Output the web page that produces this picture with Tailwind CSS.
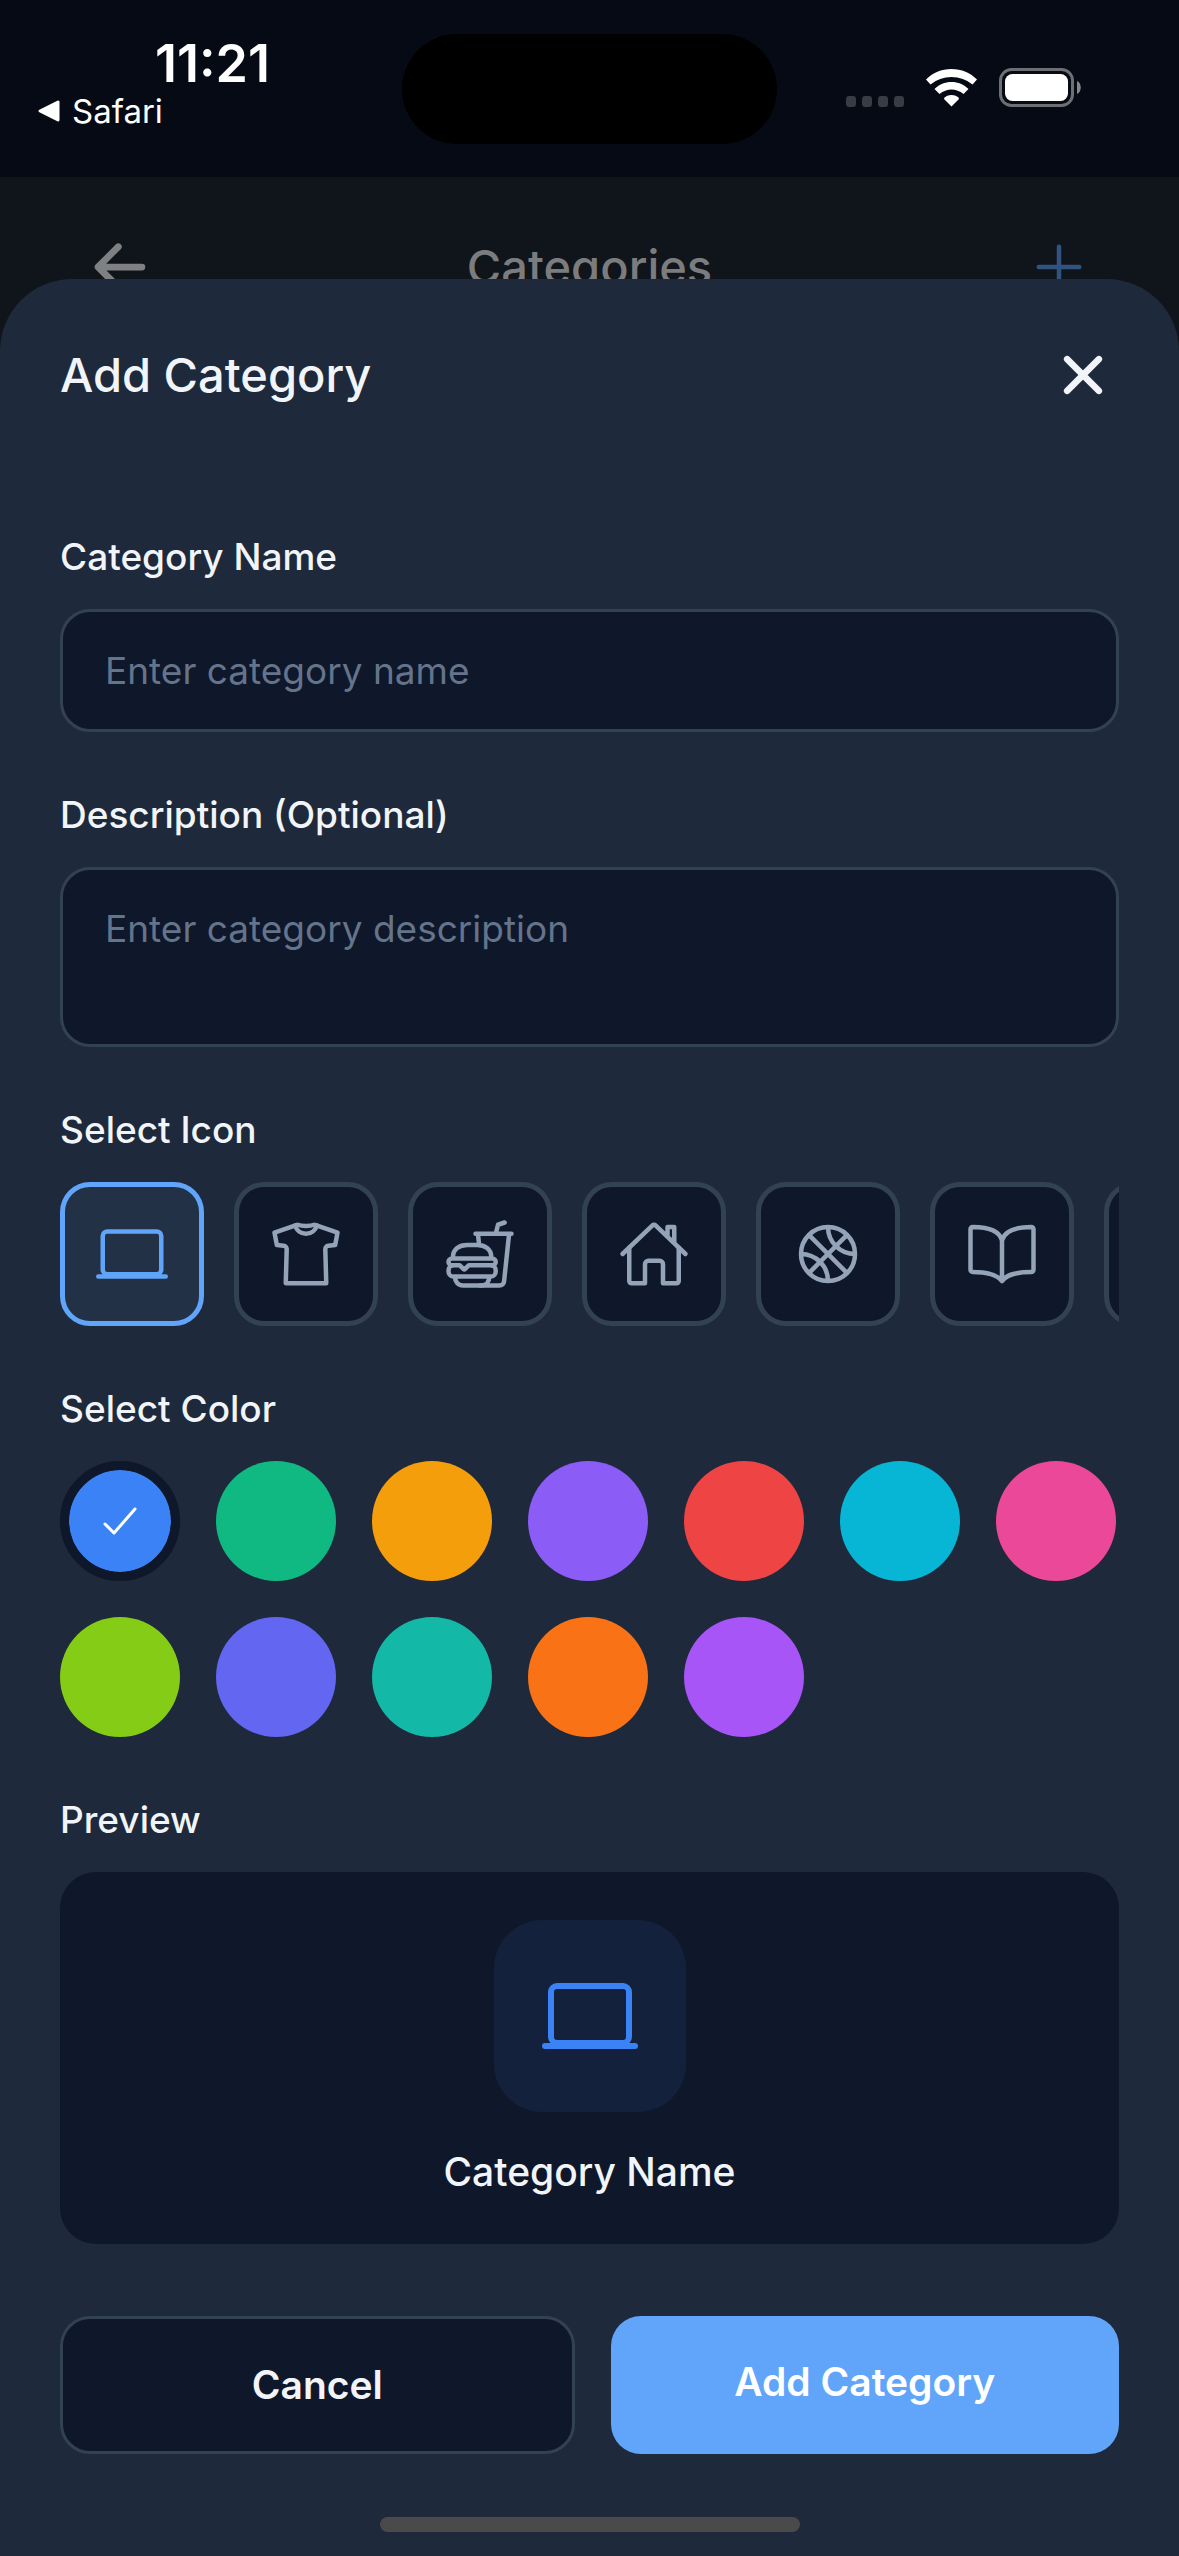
<!DOCTYPE html>
<html lang="en">
<head>
<meta charset="utf-8">
<meta name="viewport" content="width=device-width, initial-scale=1">
<title>Add Category</title>
<script src="https://cdn.jsdelivr.net/npm/@tailwindcss/browser@4"></script>
</head>
<body class="flex min-h-screen flex-col bg-[#10141b] font-[Inter,'Liberation_Sans',sans-serif] text-[#f1f5f9]">

<!-- Shared icon shapes -->
<svg class="hidden" aria-hidden="true">
  <symbol id="laptop" viewBox="0 0 512 512"><rect x="48" y="96" width="416" height="304" rx="32" stroke-linejoin="round"/><path d="M16 416h480"/></symbol>
</svg>

<!-- Status bar -->
<div class="grid h-[177px] grid-cols-[1fr_375px_1fr] bg-[#050a14] text-white">
  <div class="flex flex-col pt-8 pl-9">
    <time class="pl-[119px] text-[52px] leading-[64px] font-semibold">11:21</time>
    <a href="#" class="flex items-center gap-3 text-[33px] leading-[30px]">
      <svg class="h-6 w-6" viewBox="0 0 24 24" fill="currentColor" stroke="currentColor" stroke-width="3" stroke-linejoin="round"><path d="M4 12 22 3v18z"/></svg>
      Safari
    </a>
  </div>
  <div class="mt-[34px] h-[110px] rounded-full bg-black"></div>
  <div class="flex items-start gap-[22px] pt-[68px] pl-[69px]">
    <svg class="h-[39px] w-[58px]" viewBox="0 0 58 39" fill="#3a3c45"><rect y="28" width="10" height="11" rx="3"/><rect x="16" y="28" width="10" height="11" rx="3"/><rect x="32" y="28" width="10" height="11" rx="3"/><rect x="48" y="28" width="10" height="11" rx="3"/></svg>
    <svg class="h-[39px] w-[51px]" viewBox="0 0 51 39" fill="white"><path d="M25.500 1C35.500 1 44.500 5 51 11.500L46.500 16.500Q37.500 9 25.500 9T4.500 16.500L0 11.500C6.500 5 15.500 1 25.500 1Z"/><path d="M25.500 14C32 14 38 16.500 42.500 21L37.500 26Q32 21.500 25.500 21.500T13.500 26L8.500 21C13 16.500 19 14 25.500 14Z"/><path d="M25.500 27C28.500 27 31 28 33 30L32.500 31.500 25.500 38.500 18.500 31.500 18 30C20 28 22.500 27 25.500 27Z"/></svg>
    <svg class="h-[39px] w-[82px]" viewBox="0 0 82 39"><rect x="1.500" y="1.500" width="72" height="36" rx="11" fill="none" stroke="#6d6f75" stroke-width="3"/><rect x="6" y="6" width="63" height="27" rx="7.500" fill="white"/><path d="M78 13c5 2 5 11 0 13z" fill="#85878c"/></svg>
  </div>
</div>

<!-- Screen behind the sheet -->
<header class="flex items-center justify-between px-[84px] py-[54px]">
  <button type="button" aria-label="Back" class="text-[#7f8082]">
    <svg class="size-[72px]" viewBox="0 0 512 512" fill="none" stroke="currentColor" stroke-width="48" stroke-linecap="round" stroke-linejoin="round"><path d="M244 400 100 256l144-144M120 256h292"/></svg>
  </button>
  <h1 class="text-[47px] leading-[72px] font-medium text-[#7b7c7e]">Categories</h1>
  <button type="button" aria-label="New category" class="text-[#305380]">
    <svg class="size-[72px]" viewBox="0 0 512 512" fill="none" stroke="currentColor" stroke-width="32" stroke-linecap="round"><path d="M256 112v288M400 256H112"/></svg>
  </button>
</header>

<!-- Sheet -->
<form class="relative -mt-[78px] flex grow flex-col rounded-t-[72px] bg-[#1e293b] px-[60px] pt-[60px] pb-6">
  <div class="mb-[122px] flex items-center justify-between">
    <h2 class="text-[47px] leading-[72px] font-medium">Add Category</h2>
    <button type="button" aria-label="Close">
      <svg class="size-[72px]" viewBox="0 0 512 512" fill="none" stroke="currentColor" stroke-width="46" stroke-linecap="round"><path d="m143 143 226 226M369 143 143 369"/></svg>
    </button>
  </div>

  <div class="flex flex-col gap-[59px]">
    <div class="flex flex-col gap-7">
      <label for="name" class="text-[37px] leading-[48px] font-medium">Category Name</label>
      <input id="name" type="text" placeholder="Enter category name" class="w-full rounded-[30px] border-3 border-[#334155] bg-[#0f172a] px-[42px] py-9 text-[37px] leading-[45px] placeholder:text-[#64748b]">
    </div>

    <div class="flex flex-col gap-7">
      <label for="description" class="text-[37px] leading-[48px] font-medium">Description (Optional)</label>
      <textarea id="description" placeholder="Enter category description" class="h-[180px] w-full resize-none rounded-[30px] border-3 border-[#334155] bg-[#0f172a] px-[42px] py-9 text-[37px] leading-[45px] placeholder:text-[#64748b]"></textarea>
    </div>

    <fieldset class="min-w-0">
      <legend class="mb-7 text-[37px] leading-[48px] font-medium">Select Icon</legend>
      <div class="flex gap-[30px] overflow-hidden text-[#94a3b8]">
        <label class="relative grid size-36 shrink-0 place-items-center rounded-[30px] border-5 border-[#60a5fa] bg-[#233147] text-[#60a5fa]">
          <input type="radio" name="icon" value="laptop" checked class="sr-only" aria-label="Laptop">
          <svg class="size-[72px]" fill="none" stroke="currentColor" stroke-width="32" stroke-linecap="round"><use href="#laptop"/></svg>
        </label>
        <label class="relative grid size-36 shrink-0 place-items-center rounded-[30px] border-5 border-[#334155] bg-[#0f172a]">
          <input type="radio" name="icon" value="shirt" class="sr-only" aria-label="Shirt">
          <svg class="size-[72px]" viewBox="0 0 512 512" fill="none" stroke="currentColor" stroke-width="32" stroke-linecap="round" stroke-linejoin="round"><path d="M314.560 48s-22.780 8-58.560 8-58.560-8-58.560-8a31.940 31.940 0 0 0-10.570 1.800L32 104l16.630 88 48.880 5.520a24 24 0 0 1 21.290 24.580L112 464h288l-6.800-241.900a24 24 0 0 1 21.290-24.580L463.370 192 480 104 325.130 49.800a31.940 31.940 0 0 0-10.570-1.800z"/><path d="M333.310 52.660a80 80 0 0 1-154.620 0"/></svg>
        </label>
        <label class="relative grid size-36 shrink-0 place-items-center rounded-[30px] border-5 border-[#334155] bg-[#0f172a]">
          <input type="radio" name="icon" value="food" class="sr-only" aria-label="Fast food">
          <svg class="size-[72px]" viewBox="0 0 512 512" fill="none" stroke="currentColor" stroke-width="32" stroke-linecap="round" stroke-linejoin="round"><path d="M322 416c0 35.350-20.650 64-56 64H134c-35.350 0-56-28.650-56-64M336 336c17.670 0 32 17.910 32 40s-14.330 40-32 40H64c-17.670 0-32-17.910-32-40s14.330-40 32-40"/><path d="M344 336H179.310a8 8 0 0 0-5.650 2.340l-26.830 26.830a4 4 0 0 1-5.660 0l-26.830-26.830a8 8 0 0 0-5.650-2.340H56a24 24 0 0 1 0-48h288a24 24 0 0 1 0 48zM64 276v-.220c0-55 45-83.780 100-83.780h72c55 0 100 29 100 84M241 112l7.440 63.970M256 480h139.310a32 32 0 0 0 31.910-29.610L463 112M368 112l16-64 47-16M224 112h256"/></svg>
        </label>
        <label class="relative grid size-36 shrink-0 place-items-center rounded-[30px] border-5 border-[#334155] bg-[#0f172a]">
          <input type="radio" name="icon" value="home" class="sr-only" aria-label="Home">
          <svg class="size-[72px]" viewBox="0 0 512 512" fill="none" stroke="currentColor" stroke-width="32" stroke-linecap="round" stroke-linejoin="round"><path d="M80 212v236a16 16 0 0 0 16 16h96V328a24 24 0 0 1 24-24h80a24 24 0 0 1 24 24v136h96a16 16 0 0 0 16-16V212"/><path d="M480 256 266.890 52c-5-5.280-16.690-5.340-21.780 0L32 256M400 179V64h-48v69"/></svg>
        </label>
        <label class="relative grid size-36 shrink-0 place-items-center rounded-[30px] border-5 border-[#334155] bg-[#0f172a]">
          <input type="radio" name="icon" value="sports" class="sr-only" aria-label="Basketball">
          <svg class="size-[72px]" viewBox="0 0 512 512" fill="none" stroke="currentColor" stroke-width="32"><circle cx="256" cy="256" r="192"/><path d="m120 120 272 272M392 120 120 392M256 64a192 192 0 0 0 192 192M64 256a192 192 0 0 1 192 192"/></svg>
        </label>
        <label class="relative grid size-36 shrink-0 place-items-center rounded-[30px] border-5 border-[#334155] bg-[#0f172a]">
          <input type="radio" name="icon" value="book" class="sr-only" aria-label="Book">
          <svg class="size-[72px]" viewBox="0 0 512 512" fill="none" stroke="currentColor" stroke-width="32" stroke-linecap="round" stroke-linejoin="round"><path d="M256 160c16-63.160 76.430-95.410 208-96a15.940 15.940 0 0 1 16 16v288a16 16 0 0 1-16 16c-128 0-177.450 25.810-208 64-30.370-38-80-64-208-64-9.880 0-16-8.050-16-17V80a15.940 15.940 0 0 1 16-16c131.570.590 192 32.840 208 96zM256 160v288"/></svg>
        </label>
        <label class="relative grid size-36 shrink-0 place-items-center rounded-[30px] border-5 border-[#334155] bg-[#0f172a]">
          <input type="radio" name="icon" value="other" class="sr-only" aria-label="Other">
        </label>
      </div>
    </fieldset>

    <fieldset class="min-w-0">
      <legend class="mb-7 text-[37px] leading-[48px] font-medium">Select Color</legend>
      <div class="flex flex-wrap gap-9">
        <label class="relative grid size-[120px] place-items-center rounded-full border-9 border-[#0f172a] bg-[#3b82f6] bg-clip-padding">
          <input type="radio" name="color" value="blue" checked class="sr-only" aria-label="Blue">
          <svg class="size-12" viewBox="0 0 512 512" fill="none" stroke="white" stroke-width="32" stroke-linecap="round" stroke-linejoin="round"><path d="M416 128 192 384l-96-96"/></svg>
        </label>
        <input type="radio" name="color" value="emerald" aria-label="Emerald" class="size-[120px] appearance-none rounded-full bg-[#10b981]">
        <input type="radio" name="color" value="amber" aria-label="Amber" class="size-[120px] appearance-none rounded-full bg-[#f59e0b]">
        <input type="radio" name="color" value="violet" aria-label="Violet" class="size-[120px] appearance-none rounded-full bg-[#8b5cf6]">
        <input type="radio" name="color" value="red" aria-label="Red" class="size-[120px] appearance-none rounded-full bg-[#ef4444]">
        <input type="radio" name="color" value="cyan" aria-label="Cyan" class="size-[120px] appearance-none rounded-full bg-[#06b6d4]">
        <input type="radio" name="color" value="pink" aria-label="Pink" class="size-[120px] appearance-none rounded-full bg-[#ec4899]">
        <input type="radio" name="color" value="lime" aria-label="Lime" class="size-[120px] appearance-none rounded-full bg-[#84cc16]">
        <input type="radio" name="color" value="indigo" aria-label="Indigo" class="size-[120px] appearance-none rounded-full bg-[#6366f1]">
        <input type="radio" name="color" value="teal" aria-label="Teal" class="size-[120px] appearance-none rounded-full bg-[#14b8a6]">
        <input type="radio" name="color" value="orange" aria-label="Orange" class="size-[120px] appearance-none rounded-full bg-[#f97316]">
        <input type="radio" name="color" value="purple" aria-label="Purple" class="size-[120px] appearance-none rounded-full bg-[#a855f7]">
      </div>
    </fieldset>

    <section>
      <h3 class="mb-7 text-[37px] leading-[48px] font-medium">Preview</h3>
      <div class="flex flex-col items-center gap-9 rounded-[36px] bg-[#0f172a] py-12">
        <div class="grid size-48 place-items-center rounded-[48px] bg-[#13213c] text-[#3b82f6]">
          <svg class="size-24" fill="none" stroke="currentColor" stroke-width="32" stroke-linecap="round"><use href="#laptop"/></svg>
        </div>
        <p class="text-[39px] leading-[48px] font-medium">Category Name</p>
      </div>
    </section>
  </div>

  <div class="mt-[72px] flex gap-9">
    <button type="button" class="flex flex-1 justify-center rounded-[30px] border-3 border-[#334155] bg-[#0f172a] py-[42px] text-[39px] leading-[48px] font-semibold">Cancel</button>
    <button type="submit" class="flex flex-1 justify-center rounded-[30px] bg-[#60a5fa] py-[42px] text-[39px] leading-[48px] font-semibold text-white">Add Category</button>
  </div>

  <div class="mt-[63px] h-[15px] w-[420px] self-center rounded-full bg-[#4a4a4a]"></div>
</form>
</body>
</html>
